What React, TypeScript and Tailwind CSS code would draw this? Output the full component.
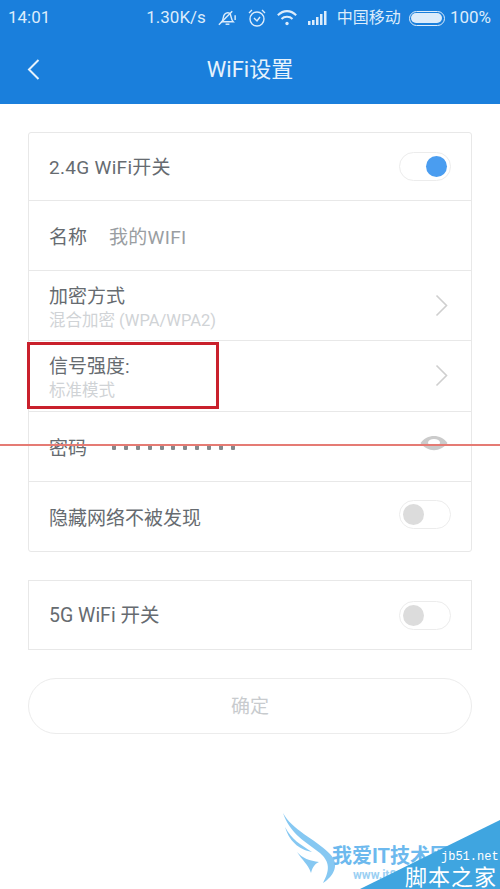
import React from "react";

const FONT = "font-['Roboto','Noto_Sans_CJK_SC',sans-serif]";

function Toggle({ on, className = "" }: { on?: boolean; className?: string }) {
  return (
    <div className={`flex h-[29px] w-[52px] items-center rounded-full border border-[#ececec] bg-white px-[3px] ${on ? "justify-end" : "justify-start"} ${className}`}>
      <div className={`h-[21px] w-[21px] rounded-full ${on ? "bg-[#4a9df0]" : "bg-[#dcdcdc]"}`} />
    </div>
  );
}

function Chevron() {
  return (
    <svg width="13" height="23" viewBox="0 0 13 23" fill="none" className="mb-[1px] mr-[3px]">
      <path d="M1.5 1.5 L11.5 11.5 L1.5 21.5" stroke="#cfcfcf" strokeWidth="1.6" />
    </svg>
  );
}

function Row({ children, className }: { children: React.ReactNode; className: string }) {
  return <div className={`flex items-center justify-between px-5 ${className}`}>{children}</div>;
}

function TwoLine({ title, sub }: { title: string; sub: string }) {
  return (
    <div className="flex flex-col pt-[3px]">
      <span className="text-[19px] leading-[26px] text-[#666b70]">{title}</span>
      <span className="pt-[1px] text-[16.5px] leading-[20px] text-[#d0d3d6]">{sub}</span>
    </div>
  );
}

export default function App() {
  return (
    <div className={`relative h-[889px] w-[500px] overflow-hidden bg-white ${FONT}`}>
      <header className="h-[104px] bg-[#1a7fdc] text-[#dcecfb]">
        <div className="flex h-[36px] items-center justify-between pl-2 pr-[9px] text-[17px]">
          <span>14:01</span>
          <div className="flex items-center">
            <span>1.30K/s</span>
            <svg width="21" height="20" viewBox="0 0 22 20" fill="none" stroke="#dcecfb" strokeWidth="1.5" className="ml-[11px]">
              <path d="M5 14 C7 12 6 8 8 6 C10 4 13 4 14 6 C15 9 15 12 17 14 Z" />
              <path d="M9 16.5 H13" />
              <path d="M2 17 L16 3" />
              <path d="M19 7 V12" />
            </svg>
            <svg width="20" height="20" viewBox="0 0 20 20" fill="none" stroke="#dcecfb" strokeWidth="1.4" className="ml-[9px]">
              <circle cx="10" cy="11" r="7" />
              <path d="M7 10 L10 13 L13 9" />
              <path d="M2 5 L5 2 M18 5 L15 2" />
            </svg>
            <svg width="22" height="18" viewBox="0 0 24 18" fill="none" stroke="#dcecfb" strokeWidth="2.2" className="ml-[9px]">
              <path d="M2 6 C8 0 16 0 22 6" />
              <path d="M6 10 C9 7 15 7 18 10" />
              <circle cx="12" cy="15" r="1.8" fill="#dcecfb" stroke="none" />
            </svg>
            <svg width="20" height="16" viewBox="0 0 20 16" fill="#dcecfb" className="ml-[10px]">
              <rect x="0" y="11" width="2.5" height="4" />
              <rect x="4" y="10" width="2.5" height="5" />
              <rect x="8" y="7" width="2.5" height="8" />
              <rect x="12" y="4" width="2.5" height="11" />
              <rect x="16" y="1" width="2.5" height="14" />
            </svg>
            <span className="ml-[9px] text-[16px]">中国移动</span>
            <div className="ml-[8px] flex h-[15px] w-[36px] items-center rounded-full border border-[#dcecfb] p-[1.5px]">
              <div className="h-full w-full rounded-full bg-[#dcecfb]" />
            </div>
            <span className="ml-[5px]">100%</span>
          </div>
        </div>
        <div className="relative flex h-[68px] items-center justify-center pb-[2px] text-[22px] text-[#e6f2fc]">
          <svg width="13" height="21" viewBox="0 0 13 21" fill="none" stroke="#e6f2fc" strokeWidth="2" className="absolute left-[27px] top-[23px]">
            <path d="M11.5 1 L2 10.5 L11.5 20" />
          </svg>
          <span>WiFi设置</span>
        </div>
      </header>

      <main className="flex flex-col px-7 pt-7">
        <section className="flex flex-col divide-y divide-[#e8e8e8] overflow-hidden rounded-[3px] border border-[#e8e8e8]">
          <Row className="h-[68px]">
            <span className="pt-[3px] text-[19px] tracking-[0.3px] text-[#666b70]">2.4G WiFi开关</span>
            <Toggle on />
          </Row>
          <Row className="h-[70px]">
            <div className="flex pt-[5px] text-[19px]">
              <span className="text-[#666b70]">名称</span>
              <span className="ml-[22px] tracking-[0.3px] text-[#9a9ea2]">我的WIFI</span>
            </div>
          </Row>
          <Row className="h-[70px]">
            <TwoLine title="加密方式" sub="混合加密 (WPA/WPA2)" />
            <Chevron />
          </Row>
          <Row className="h-[71px]">
            <TwoLine title="信号强度:" sub="标准模式" />
            <Chevron />
          </Row>
          <Row className="h-[70px]">
            <div className="flex items-center">
              <span className="pt-[5px] text-[19px] text-[#666b70]">密码</span>
              <div className="ml-[25px] flex gap-[7.9px]">
                {Array.from({ length: 11 }).map((_, i) => (
                  <span key={i} className="h-[6px] w-[4px] rounded-[1px] bg-[#85888b]" />
                ))}
              </div>
            </div>
            <svg width="28" height="20" viewBox="0 0 28 20" className="mb-[7px] mr-[3px]">
              <path d="M0.5 10 C7 0.5 21 0.5 27.5 10 C21 19.5 7 19.5 0.5 10 Z" fill="#cbcbcb" />
              <ellipse cx="14" cy="9.5" rx="6" ry="3.6" fill="#fff" />
            </svg>
          </Row>
          <Row className="h-[69px]">
            <span className="pt-[5px] text-[19px] text-[#666b70]">隐藏网络不被发现</span>
            <Toggle className="mb-[5px]" />
          </Row>
        </section>

        <section className="mt-7 border border-[#e8e8e8]">
          <Row className="h-[68px]">
            <span className="pt-[2px] text-[19.5px] text-[#666b70]">5G WiFi 开关</span>
            <Toggle />
          </Row>
        </section>

        <button className="mt-7 flex h-[56px] items-center justify-center rounded-full border border-[#ececec] pt-[3px] text-[19px] text-[#c8cbce]">
          确定
        </button>
      </main>

      {/* annotation overlay */}
      <div className="absolute left-[27px] top-[342px] h-[67px] w-[192px] border-[3px] border-[#c9202c]" />
      <div className="absolute left-0 top-[444px] h-[2px] w-[500px] bg-[#e57b74]" />

      {/* watermark */}
      <svg width="70" height="85" viewBox="0 0 70 85" fill="#86c8f2" className="absolute left-[280px] top-[808px]">
        <path d="M3 5 C12 22 34 30 50 46 C60 56 54 68 43 75 C50 62 50 54 40 45 C26 34 10 26 3 5 Z" />
        <path d="M5 19 C12 32 20 36 32 44 C22 42 10 36 5 19 Z" />
        <path d="M17 44 C22 50 30 53 39 54 C35 56 33 58 31 65 C28 56 22 52 17 44 Z" />
      </svg>
      <span className="absolute left-[332px] top-[843px] text-[20px] font-bold leading-[26px] text-[#6db9ee]">我爱IT技术网</span>
      <span className="absolute left-[353px] top-[868px] text-[12px] font-bold leading-[14px] text-[#9bd0f3]">www.it892.com</span>
      <svg width="140" height="69" viewBox="0 0 140 69" className="absolute left-[360px] top-[820px]">
        <polygon points="0,69 140,0 140,69" fill="#3fa5e0" />
      </svg>
      <span className="absolute left-[441px] top-[851px] font-['Liberation_Mono',monospace] text-[12px] leading-[13px] text-white">jb51.net</span>
      <span className="absolute left-[405px] top-[866px] text-[22px] leading-[23px] tracking-[1px] text-white">脚本之家</span>
    </div>
  );
}
